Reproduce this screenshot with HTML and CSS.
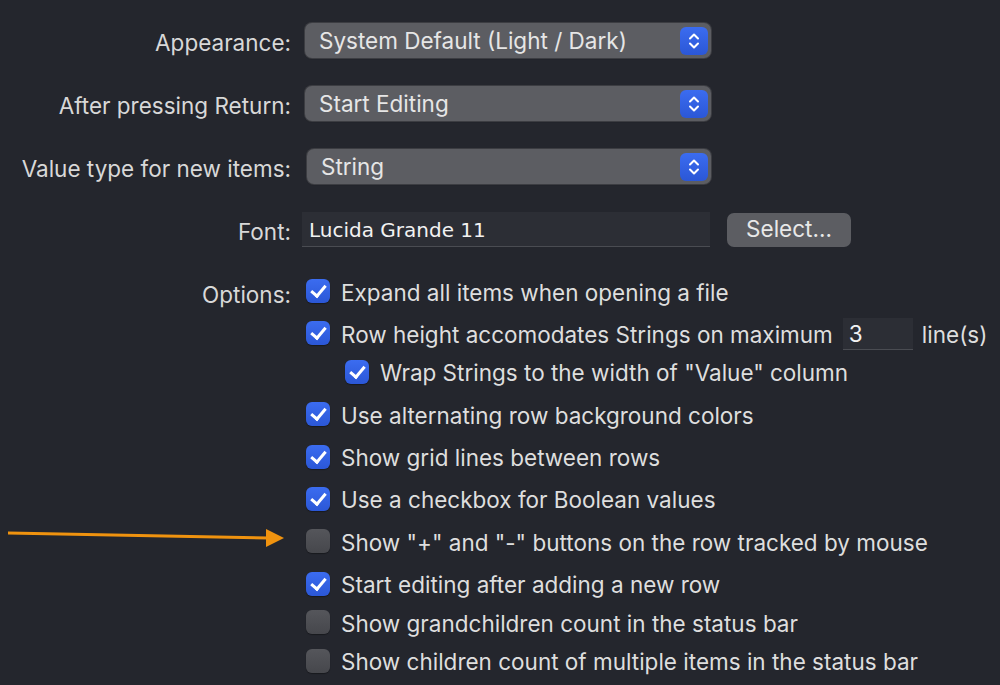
FILE: index.html
```html
<!DOCTYPE html>
<html lang="en">
  <head>
    <meta charset="UTF-8" />
    <title>Preferences</title>
    <link rel="stylesheet" href="styles.css">
  </head>
  <body>
    <div class="prefs">
      <label class="lbl">Appearance:</label>
      <div class="popup">
        <span>System Default (Light / Dark)</span>
        <span class="stepper">
          <svg width="14" height="20" viewBox="0 0 14 20"><path d="M3 7.5 L7 3.5 L11 7.5 M3 12.5 L7 16.5 L11 12.5" /></svg>
        </span>
      </div>

      <label class="lbl">After pressing Return:</label>
      <div class="popup">
        <span>Start Editing</span>
        <span class="stepper">
          <svg width="14" height="20" viewBox="0 0 14 20"><path d="M3 7.5 L7 3.5 L11 7.5 M3 12.5 L7 16.5 L11 12.5" /></svg>
        </span>
      </div>

      <label class="lbl">Value type for new items:</label>
      <div class="popup shifted">
        <span>String</span>
        <span class="stepper">
          <svg width="14" height="20" viewBox="0 0 14 20"><path d="M3 7.5 L7 3.5 L11 7.5 M3 12.5 L7 16.5 L11 12.5" /></svg>
        </span>
      </div>

      <label class="lbl">Font:</label>
      <div class="font-row">
        <div class="field font-field">Lucida Grande 11</div>
        <button class="btn">Select...</button>
      </div>

      <label class="lbl options-lbl">Options:</label>
      <div class="opts">
        <div class="opt"><span class="check on"></span>Expand all items when opening a file</div>
        <div class="opt">
          <span class="check on"></span>Row height accomodates Strings on maximum
          <span class="field num-field">3</span>
          <span class="unit">line(s)</span>
        </div>
        <div class="opt sub tight"><span class="check on"></span>Wrap Strings to the width of "Value" column</div>
        <div class="opt"><span class="check on"></span>Use alternating row background colors</div>
        <div class="opt"><span class="check on"></span>Show grid lines between rows</div>
        <div class="opt"><span class="check on"></span>Use a checkbox for Boolean values</div>
        <div class="opt"><span class="check"></span>Show "+" and "-" buttons on the row tracked by mouse</div>
        <div class="opt"><span class="check on"></span>Start editing after adding a new row</div>
        <div class="opt tight"><span class="check"></span>Show grandchildren count in the status bar</div>
        <div class="opt tight"><span class="check"></span>Show children count of multiple items in the status bar</div>
      </div>
    </div>

    <!-- annotation arrow drawn over the window -->
    <svg class="arrow" width="300" height="20" viewBox="0 0 300 20">
      <line x1="8" y1="5" x2="268" y2="10" />
      <polygon points="266,1 284,10 266,19" />
    </svg>
  </body>
</html>
```

FILE: styles.css
```css
body {
  margin: 0;
  padding: 23px 0 0 0;
  background: #24262d;
  color: #dedede;
  font-family: Inter, "Noto Sans", sans-serif;
  font-size: 22.5px;
  height: 662px;
  overflow: hidden;
  position: relative;
}
.prefs {
  display: grid;
  grid-template-columns: 291px 406px;
  column-gap: 14px;
  row-gap: 28px;
  align-items: center;
}
.lbl {
  text-align: right;
  color: #d8d8d8;
  white-space: nowrap;
  padding-top: 3px;
}
.popup {
  height: 35px;
  box-sizing: border-box;
  background: #5c5d62;
  border-radius: 7px;
  box-shadow: 0 0 0 1px #3c3d42, 0 1px 1px rgba(0, 0, 0, 0.4);
  display: flex;
  align-items: center;
  justify-content: space-between;
  padding: 0 3px 0 14px;
  color: #e6e6e6;
}
.popup span:first-child {
  margin-top: -1px;
}
.popup.shifted {
  margin-left: 2px;
}
.stepper {
  width: 28px;
  height: 28px;
  border-radius: 6px;
  background: linear-gradient(#3b6cf0, #2b57d6);
  display: flex;
  align-items: center;
  justify-content: center;
}
.stepper svg path {
  fill: none;
  stroke: #fff;
  stroke-width: 2;
  stroke-linecap: round;
  stroke-linejoin: round;
}
.font-row {
  display: flex;
  align-items: center;
  gap: 17px;
  margin-left: -3px;
}
.field {
  background: #2c2e35;
  border-bottom: 1px solid #4a4c52;
  box-sizing: border-box;
  color: #f2f2f2;
}
.font-field {
  width: 408px;
  height: 35px;
  padding: 2px 7px 0;
  display: flex;
  align-items: center;
  font-family: "DejaVu Sans", sans-serif;
  font-size: 20px;
  flex-shrink: 0;
}
.btn {
  width: 124px;
  height: 34px;
  border: none;
  border-radius: 7px;
  background: #5c5d62;
  color: #e8e8e8;
  font-family: Inter, "Noto Sans", sans-serif;
  font-size: 22.5px;
  flex-shrink: 0;
  padding: 0 0 2px 0;
}
.options-lbl {
  align-self: start;
  margin-top: 5px;
  line-height: 24px;
}
.opts {
  align-self: start;
  margin-top: 5px;
  margin-left: 1px;
  white-space: nowrap;
}
.opt {
  height: 24px;
  display: flex;
  align-items: center;
  gap: 11px;
  margin-top: 18.4px;
}
.opt:first-child {
  margin-top: 0;
}
.opt.tight {
  margin-top: 14.4px;
}
.opt.sub {
  margin-left: 39px;
}
.check {
  width: 24px;
  height: 24px;
  border-radius: 6px;
  flex-shrink: 0;
  box-sizing: border-box;
  background: linear-gradient(#55565b, #46474c);
  box-shadow: 0 1px 1px rgba(0, 0, 0, 0.35);
  position: relative;
  margin-top: -2px;
}
.check.on {
  background: linear-gradient(#3b6cf0, #2b57d6);
}
.check.on::after {
  content: "";
  position: absolute;
  left: 8px;
  top: 3px;
  width: 6px;
  height: 12px;
  border-right: 3px solid #fff;
  border-bottom: 3px solid #fff;
  transform: rotate(40deg);
}
.num-field {
  width: 70px;
  height: 32px;
  padding: 0 6px;
  display: flex;
  align-items: center;
  margin-left: -1px;
  flex-shrink: 0;
}
.unit {
  margin-left: -2px;
}
.arrow {
  position: absolute;
  left: 0;
  top: 528px;
}
.arrow line {
  stroke: #f0930f;
  stroke-width: 3;
}
.arrow polygon {
  fill: #f0930f;
}
```
